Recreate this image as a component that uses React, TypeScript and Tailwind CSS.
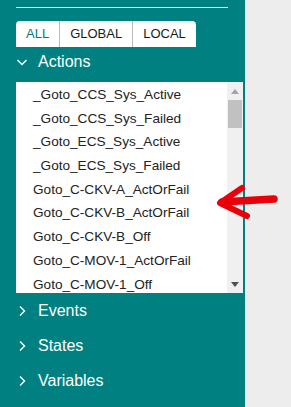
import React from "react";

const items = [
  "_Goto_CCS_Sys_Active",
  "_Goto_CCS_Sys_Failed",
  "_Goto_ECS_Sys_Active",
  "_Goto_ECS_Sys_Failed",
  "Goto_C-CKV-A_ActOrFail",
  "Goto_C-CKV-B_ActOrFail",
  "Goto_C-CKV-B_Off",
  "Goto_C-MOV-1_ActOrFail",
  "Goto_C-MOV-1_Off",
];

function Chevron({ down }: { down?: boolean }) {
  return (
    <svg width="12" height="12" viewBox="0 0 12 12" className="shrink-0">
      {down ? (
        <path d="M1.5 4 L6 8.5 L10.5 4" fill="none" stroke="white" strokeWidth="1.4" />
      ) : (
        <path d="M4 1.5 L8.5 6 L4 10.5" fill="none" stroke="white" strokeWidth="1.4" />
      )}
    </svg>
  );
}

function Section({ label }: { label: string }) {
  return (
    <div className="flex items-center h-[35px] pl-[16px] gap-[10px] text-white text-[16px]">
      <Chevron />
      <span>{label}</span>
    </div>
  );
}

export default function App() {
  return (
    <div
      className="relative w-[291px] h-[407px] bg-[#ededed] flex overflow-hidden"
      style={{ fontFamily: '"Liberation Sans", Arial, sans-serif' }}
    >
      <div className="w-[245px] h-full bg-[#008080] flex flex-col">
        <div className="h-[7px]" />
        <div className="ml-[16px] w-[212px] h-px bg-white" />
        <div className="h-[13px]" />
        <div className="ml-[16px] flex h-[26px] w-fit bg-white rounded-t-[4px] text-[13px]">
          <div className="flex items-center px-[10px] text-[#007a80] border-r border-[#bbbbbb]">ALL</div>
          <div className="flex items-center px-[10px] text-[#1a1a1a] border-r border-[#bbbbbb]">GLOBAL</div>
          <div className="flex items-center px-[10px] text-[#1a1a1a]">LOCAL</div>
        </div>
        <div className="flex items-center h-[35px] pb-[5px] pl-[16px] gap-[10px] text-white text-[16px]">
          <Chevron down />
          <span>Actions</span>
        </div>
        <div className="ml-[16px] w-[227px] h-[211px] bg-white flex overflow-hidden">
          <div className="flex-1 pt-px overflow-hidden">
            {items.map((t) => (
              <div key={t} className="h-[23.7px] leading-[23.7px] pl-[17px] text-[13.6px] text-[#222222] whitespace-nowrap">
                {t}
              </div>
            ))}
          </div>
          <div className="w-[16px] bg-[#f0f0f0] flex flex-col items-center">
            <div className="h-[18px] flex items-center justify-center">
              <svg width="8" height="5" viewBox="0 0 8 5"><path d="M0 5 L4 0 L8 5 Z" fill="#a3a3a3" /></svg>
            </div>
            <div className="w-[14px] h-[28px] bg-[#c1c1c1]" />
            <div className="flex-1" />
            <div className="h-[18px] flex items-center justify-center">
              <svg width="8" height="5" viewBox="0 0 8 5"><path d="M0 0 L8 0 L4 5 Z" fill="#505050" /></svg>
            </div>
          </div>
        </div>
        <Section label="Events" />
        <Section label="States" />
        <Section label="Variables" />
      </div>
      <svg
        className="absolute left-0 top-0 pointer-events-none"
        width="291"
        height="407"
        viewBox="0 0 291 407"
      >
        <g fill="none" stroke="#e8000b" strokeLinecap="round" strokeLinejoin="round">
          <path d="M222 202 C 240 201, 258 200, 274 199" strokeWidth="7.5" />
          <path d="M242 188 L220 203 L247 216" strokeWidth="6" />
        </g>
      </svg>
    </div>
  );
}
